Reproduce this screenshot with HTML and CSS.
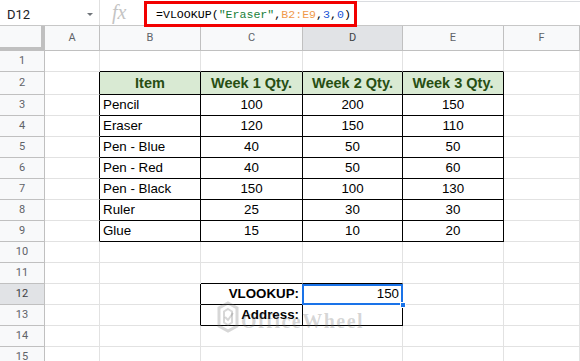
FILE: index.html
```html
<!DOCTYPE html>
<html>
<head>
<meta charset="utf-8">
<link rel="stylesheet" href="styles.css">
</head>
<body>
<div class="page">
  <div class="fbar">
    <div class="namebox"><span class="nb-text">D12</span><span class="caret"></span></div>
    <div class="fx">fx</div>
    <div class="formula"><span class="tok-d">=VLOOKUP(</span><span class="tok-s">"Eraser"</span><span class="tok-d">,</span><span class="tok-r">B2:E9</span><span class="tok-d">,</span><span class="tok-n">3</span><span class="tok-d">,</span><span class="tok-n">0</span><span class="tok-d">)</span></div>
    <div class="fbar-rest"></div>
  </div>

  <div class="sheet">
    <div class="c corner"></div>
    <div class="c ch">A</div>
    <div class="c ch">B</div>
    <div class="c ch">C</div>
    <div class="c ch act">D</div>
    <div class="c ch">E</div>
    <div class="c ch">F</div>

    <div class="c rh">1</div>
    <div class="c"></div>
    <div class="c kb"></div>
    <div class="c kb"></div>
    <div class="c kb"></div>
    <div class="c kb"></div>
    <div class="c"></div>

    <div class="c rh">2</div>
    <div class="c kr"></div>
    <div class="c k hd">Item</div>
    <div class="c k hd">Week 1 Qty.</div>
    <div class="c k hd">Week 2 Qty.</div>
    <div class="c k hd">Week 3 Qty.</div>
    <div class="c"></div>

    <div class="c rh">3</div>
    <div class="c kr"></div>
    <div class="c k">Pencil</div>
    <div class="c k ctr">100</div>
    <div class="c k ctr">200</div>
    <div class="c k ctr">150</div>
    <div class="c"></div>

    <div class="c rh">4</div>
    <div class="c kr"></div>
    <div class="c k">Eraser</div>
    <div class="c k ctr">120</div>
    <div class="c k ctr">150</div>
    <div class="c k ctr">110</div>
    <div class="c"></div>

    <div class="c rh">5</div>
    <div class="c kr"></div>
    <div class="c k">Pen - Blue</div>
    <div class="c k ctr">40</div>
    <div class="c k ctr">50</div>
    <div class="c k ctr">50</div>
    <div class="c"></div>

    <div class="c rh">6</div>
    <div class="c kr"></div>
    <div class="c k">Pen - Red</div>
    <div class="c k ctr">40</div>
    <div class="c k ctr">50</div>
    <div class="c k ctr">60</div>
    <div class="c"></div>

    <div class="c rh">7</div>
    <div class="c kr"></div>
    <div class="c k">Pen - Black</div>
    <div class="c k ctr">150</div>
    <div class="c k ctr">100</div>
    <div class="c k ctr">130</div>
    <div class="c"></div>

    <div class="c rh">8</div>
    <div class="c kr"></div>
    <div class="c k">Ruler</div>
    <div class="c k ctr">25</div>
    <div class="c k ctr">30</div>
    <div class="c k ctr">30</div>
    <div class="c"></div>

    <div class="c rh">9</div>
    <div class="c kr"></div>
    <div class="c k">Glue</div>
    <div class="c k ctr">15</div>
    <div class="c k ctr">10</div>
    <div class="c k ctr">20</div>
    <div class="c"></div>

    <div class="c rh">10</div>
    <div class="c"></div>
    <div class="c"></div>
    <div class="c"></div>
    <div class="c"></div>
    <div class="c"></div>
    <div class="c"></div>

    <div class="c rh">11</div>
    <div class="c"></div>
    <div class="c"></div>
    <div class="c kb"></div>
    <div class="c kb"></div>
    <div class="c"></div>
    <div class="c"></div>

    <div class="c rh act">12</div>
    <div class="c"></div>
    <div class="c kr"></div>
    <div class="c k rt b">VLOOKUP:</div>
    <div class="c k rt cur">150<span class="sel"></span><span class="handle"></span></div>
    <div class="c"></div>
    <div class="c"></div>

    <div class="c rh">13</div>
    <div class="c"></div>
    <div class="c kr"></div>
    <div class="c k rt b">Address:</div>
    <div class="c k"></div>
    <div class="c"></div>
    <div class="c"></div>

    <div class="c rh">14</div>
    <div class="c"></div>
    <div class="c"></div>
    <div class="c"></div>
    <div class="c"></div>
    <div class="c"></div>
    <div class="c"></div>

    <div class="c rh">15</div>
    <div class="c"></div>
    <div class="c"></div>
    <div class="c"></div>
    <div class="c"></div>
    <div class="c"></div>
    <div class="c"></div>
  </div>

  <div class="watermark">
    <svg class="wm-logo" width="22" height="32" viewBox="0 0 22 32">
      <polygon points="11,2 20,7 20,25 11,30 2,25 2,7" fill="none" stroke="currentColor" stroke-width="3"/>
      <polygon points="11,8 15,10.5 15,21.5 11,24 7,21.5 7,10.5" fill="none" stroke="currentColor" stroke-width="2"/>
      <path d="M8 16 L11 19 L16 12" fill="none" stroke="currentColor" stroke-width="2"/>
    </svg>
    <span class="wm-text">OfficeWheel</span>
  </div>
</div>
</body>
</html>
```

FILE: styles.css
```css
html, body {
  margin: 0;
  padding: 0;
  background: #ffffff;
}

.page {
  position: relative;
  width: 580px;
  height: 361px;
  overflow: hidden;
  font-family: "Liberation Sans", Arial, sans-serif;
}

/* ---------- formula bar ---------- */
.fbar {
  display: flex;
  align-items: flex-start;
  height: 25px;
  border-bottom: 1px solid #c7c7c7;
  box-sizing: content-box;
}

.namebox {
  width: 100px;
  height: 25px;
  box-sizing: border-box;
  border-right: 1px solid #e0e0e0;
  display: flex;
  align-items: center;
  padding-left: 7px;
  padding-top: 3px;
  font-family: Roboto, "Liberation Sans", sans-serif;
  font-size: 13px;
  color: #202124;
}

.nb-text {
  flex: 1;
}

.caret {
  width: 0;
  height: 0;
  border-left: 3px solid transparent;
  border-right: 3px solid transparent;
  border-top: 3px solid #70757a;
  margin-right: 6px;
  margin-top: 1px;
}

.fx {
  width: 44px;
  height: 25px;
  box-sizing: border-box;
  padding-left: 12px;
  padding-top: 1px;
  font-family: "Liberation Serif", serif;
  font-style: italic;
  font-size: 20px;
  line-height: 22px;
  color: #c4c4c4;
}

.formula {
  position: relative;
  z-index: 2;
  margin-top: 1px;
  width: 213px;
  height: 26px;
  box-sizing: border-box;
  border: 3px solid #f20000;
  display: flex;
  align-items: center;
  padding-left: 9px;
  padding-top: 1px;
  font-family: "Liberation Mono", monospace;
  font-size: 11.6px;
  white-space: nowrap;
}

.tok-d { color: #000000; }
.tok-s { color: #188038; }
.tok-r { color: #f09a4b; }
.tok-n { color: #1a55d6; }

.fbar-rest {
  flex: 1;
  margin-top: 1px;
  border-top: 1px solid #dadce0;
}

/* ---------- sheet grid ---------- */
.sheet {
  display: grid;
  grid-template-columns: 45px 55px 101px 102px 100px 101px 1fr;
  grid-template-rows: 25px 21px 23px;
  grid-auto-rows: 21px;
}

.c {
  box-sizing: border-box;
  border-right: 1px solid #e2e2e2;
  border-bottom: 1px solid #e2e2e2;
  display: flex;
  align-items: center;
  padding: 0 3px;
  font-size: 13.33px;
  line-height: 16px;
  color: #000000;
  white-space: nowrap;
  overflow: visible;
}

.corner {
  background: #f8f9fa;
  border-right: 4px solid #c0c0c0;
  border-bottom: 4px solid #c0c0c0;
}

.ch, .rh {
  background: #f8f9fa;
  border-right-color: #c0c0c0;
  border-bottom-color: #c0c0c0;
  justify-content: center;
  font-family: Roboto, "Liberation Sans", sans-serif;
  font-size: 11px;
  color: #5f6368;
  padding: 0;
}

.act {
  background: #e1e3e6;
  color: #3c4043;
}

.hd {
  background: #d9ead3;
  color: #274e13;
  font-weight: bold;
  font-size: 14.5px;
  justify-content: center;
}

.ctr { justify-content: center; }
.rt { justify-content: flex-end; }
.b { font-weight: bold; }

.kr { border-right-color: #000000; }
.kb { border-bottom-color: #000000; }
.k { border-right-color: #000000; border-bottom-color: #000000; }

.cur {
  position: relative;
}

.sel {
  position: absolute;
  left: -1px;
  top: 0;
  right: -1px;
  bottom: -1px;
  border: 2px solid #1a73e8;
}

.handle {
  position: absolute;
  right: -4px;
  bottom: -4px;
  width: 6px;
  height: 6px;
  box-sizing: border-box;
  background: #1a73e8;
  border: 1px solid #ffffff;
  z-index: 2;
}

/* ---------- watermark ---------- */
.watermark {
  position: absolute;
  left: 217px;
  top: 301px;
  display: flex;
  align-items: center;
  gap: 2px;
  color: rgba(110, 110, 110, 0.28);
  pointer-events: none;
}

.wm-text {
  font-family: "Liberation Serif", serif;
  font-weight: bold;
  font-size: 20px;
  letter-spacing: 1.5px;
  margin-top: 8px;
}
```
